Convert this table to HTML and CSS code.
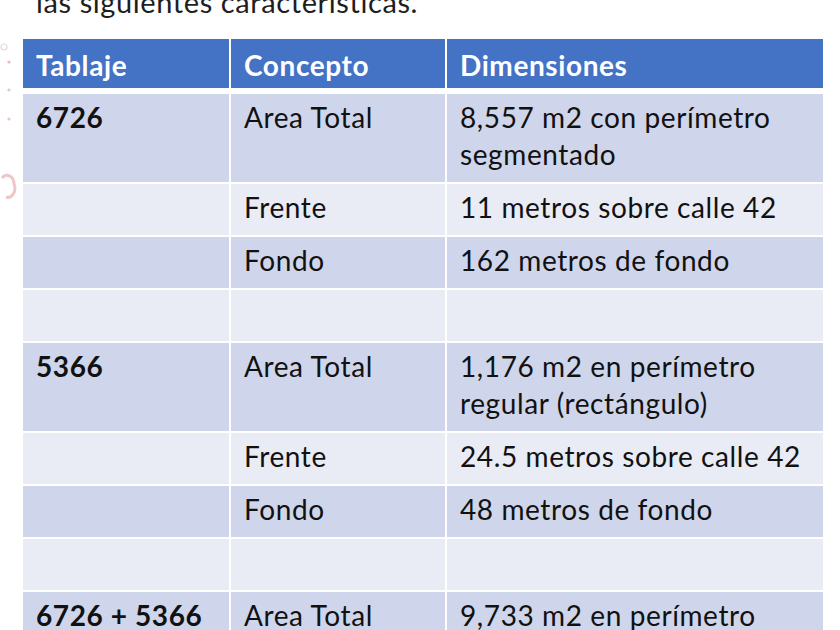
FILE: index.html
```html
<!DOCTYPE html>
<html lang="es">
<head>
<meta charset="utf-8">
<title>Tablajes</title>
<link rel="stylesheet" href="styles.css">
</head>
<body>
<div class="slide">
  <svg class="deco" width="22" height="220" viewBox="0 0 22 220" aria-hidden="true">
    <circle cx="4" cy="47" r="3" fill="none" stroke="#e6d6d8" stroke-width="1.2"/>
    <circle cx="9" cy="62" r="1.6" fill="#e9b9be"/>
    <circle cx="9" cy="90" r="1.6" fill="#eac6ca"/>
    <circle cx="9" cy="119" r="1.6" fill="#eac6ca"/>
    <path d="M2 178 A7 9 0 0 1 14 184 A7 9 0 0 1 6 197" fill="none" stroke="#f1c6ca" stroke-width="3"/>
  </svg>
  <p class="title">las siguientes características.</p>
  <table class="grid">
    <colgroup>
      <col class="c1"><col class="c2"><col class="c3">
    </colgroup>
    <thead>
      <tr><th>Tablaje</th><th>Concepto</th><th>Dimensiones</th></tr>
    </thead>
    <tbody>
      <tr class="odd"><td>6726</td><td>Area Total</td><td>8,557 m2 con perímetro segmentado</td></tr>
      <tr class="even"><td></td><td>Frente</td><td>11 metros sobre calle 42</td></tr>
      <tr class="odd"><td></td><td>Fondo</td><td>162 metros de fondo</td></tr>
      <tr class="even"><td>&nbsp;</td><td>&nbsp;</td><td>&nbsp;</td></tr>
      <tr class="odd"><td>5366</td><td>Area Total</td><td>1,176 m2 en perímetro regular (rectángulo)</td></tr>
      <tr class="even"><td></td><td>Frente</td><td>24.5 metros sobre calle 42</td></tr>
      <tr class="odd"><td></td><td>Fondo</td><td>48 metros de fondo</td></tr>
      <tr class="even"><td>&nbsp;</td><td>&nbsp;</td><td>&nbsp;</td></tr>
      <tr class="odd"><td>6726 + 5366</td><td>Area Total</td><td>9,733 m2 en perímetro</td></tr>
    </tbody>
  </table>
</div>
</body>
</html>
```

FILE: styles.css
```css
html, body {
  margin: 0;
  padding: 0;
  background: #ffffff;
}
body {
  width: 840px;
  height: 630px;
  overflow: hidden;
  font-family: Lato, "Open Sans", sans-serif;
  color: #111111;
}
.slide {
  position: relative;
  width: 840px;
  height: 630px;
  overflow: hidden;
}
.deco {
  position: absolute;
  left: 0;
  top: 0;
}
.title {
  margin: -17px 0 0 36px;
  font-size: 29px;
  letter-spacing: 0.6px;
  line-height: 38px;
  color: #1e1e1e;
  white-space: nowrap;
}
.grid {
  margin: 18px 0 0 23px;
  width: 800px;
  table-layout: fixed;
  border-collapse: separate;
  border-spacing: 0;
  font-size: 28px;
  letter-spacing: 0.6px;
  line-height: 37px;
}
.c1 { width: 206px; }
.c2 { width: 216px; }
.c3 { width: 378px; }
.grid th {
  background: #4472c4;
  color: #ffffff;
  font-weight: 700;
  text-align: left;
  padding: 7.5px 10px 4.5px 13px;
}
.grid td {
  padding: 5px 10px 9px 13px;
  vertical-align: top;
  border-top: 2px solid #ffffff;
}
.grid th + th,
.grid td + td {
  border-left: 2px solid #ffffff;
}
.grid tbody tr:first-child td {
  border-top-width: 6px;
}
.grid td:first-child {
  font-weight: 700;
}
.odd td { background: #cfd5ea; }
.even td { background: #e9ebf5; }
```
